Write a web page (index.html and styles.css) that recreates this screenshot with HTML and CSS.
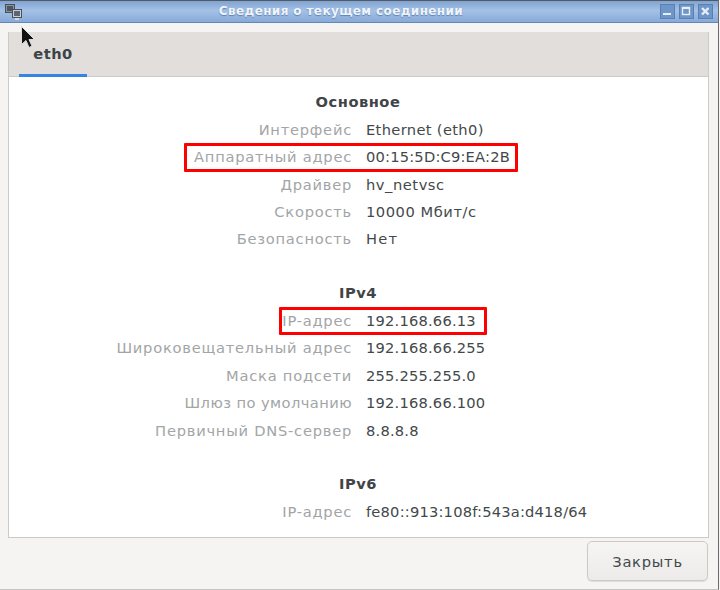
FILE: index.html
```html
<!DOCTYPE html>
<html lang="ru">
<head>
<meta charset="utf-8">
<title>Сведения о текущем соединении</title>
<link rel="stylesheet" href="styles.css">
</head>
<body>
<div class="window">
  <header class="titlebar">
    <svg class="app-icon" width="18" height="16" viewBox="0 0 18 16">
      <rect x="1.500" y="0.500" width="9" height="8" fill="#8a93a0" stroke="#4a4f57"/>
      <rect x="3" y="2" width="6" height="5" fill="#4b5563"/>
      <rect x="8.500" y="5.500" width="9" height="8" fill="#c9ced4" stroke="#4a4f57"/>
      <rect x="10" y="7" width="6" height="5" fill="#5b6573"/>
      <rect x="11" y="14" width="4" height="2" fill="#d5d8dc"/>
    </svg>
    <span class="title">Сведения о текущем соединении</span>
    <div class="win-buttons">
      <span class="win-btn"><svg width="13" height="13" viewBox="0 0 13 13"><rect x="2" y="8" width="8" height="2" fill="#e8eef6"/></svg></span>
      <span class="win-btn"><svg width="13" height="13" viewBox="0 0 13 13"><rect x="2.500" y="2.500" width="7" height="7" fill="none" stroke="#e8eef6" stroke-width="1.400"/><rect x="2" y="2" width="8" height="2" fill="#e8eef6"/></svg></span>
      <span class="win-btn"><svg width="13" height="13" viewBox="0 0 13 13"><path d="M3 3l6.500 6.500M9.500 3l-6.500 6.500" stroke="#e8eef6" stroke-width="2.400" fill="none"/></svg></span>
    </div>
  </header>
  <main class="content">
    <section class="notebook">
      <div class="tabbar"><div class="tab">eth0</div></div>
      <div class="page">
        <h2 class="heading">Основное</h2>
        <dl class="rows">
          <dt>Интерфейс</dt><dd class="latin">Ethernet (eth0)</dd>
          <dt>Аппаратный адрес</dt><dd>00:15:5D:C9:EA:2B</dd>
          <dt>Драйвер</dt><dd class="word">hv_netvsc</dd>
          <dt>Скорость</dt><dd class="word">10000 Мбит/с</dd>
          <dt>Безопасность</dt><dd class="short">Нет</dd>
        </dl>
        <h2 class="heading">IPv4</h2>
        <dl class="rows">
          <dt>IP-адрес</dt><dd>192.168.66.13</dd>
          <dt>Широковещательный адрес</dt><dd>192.168.66.255</dd>
          <dt>Маска подсети</dt><dd>255.255.255.0</dd>
          <dt class="tight">Шлюз по умолчанию</dt><dd>192.168.66.100</dd>
          <dt>Первичный DNS-сервер</dt><dd>8.8.8.8</dd>
        </dl>
        <h2 class="heading">IPv6</h2>
        <dl class="rows">
          <dt>IP-адрес</dt><dd>fe80::913:108f:543a:d418/64</dd>
        </dl>
      </div>
    </section>
    <footer class="actions"><button class="close" type="button">Закрыть</button></footer>
  </main>
  <div class="mark mark-mac"></div>
  <div class="mark mark-ip"></div>
  <svg class="cursor" width="16" height="26" viewBox="0 0 16 26">
    <path d="M1.500 1.500V19.500L6 15.500L9 22.500L12 21L9 14.500H14.500Z" fill="#111" stroke="#ddd" stroke-width="1"/>
  </svg>
</div>
</body>
</html>
```

FILE: styles.css
```css
* { box-sizing: border-box; }
html, body { margin: 0; padding: 0; }
body { width: 720px; height: 590px; overflow: hidden; background: #f5f4f2; font-family: "DejaVu Sans", sans-serif; font-size: 14.67px; color: #3f4547; }
.window { position: relative; width: 719px; height: 590px; display: flex; flex-direction: column; background: #f5f4f2; border-right: 1px solid #6b6b6b; border-bottom: 1px solid #c4c4c2; }
.titlebar { flex: none; height: 23px; display: flex; align-items: center; position: relative; background: linear-gradient(#7fa3d3, #a4c1e6 45%, #88aad8); border-top: 1px solid #55595e; border-bottom: 1px solid #6188b8; }
.app-icon { position: absolute; left: 4px; top: 3px; }
.title { flex: 1; text-align: center; font-size: 12px; font-weight: bold; letter-spacing: 0.39px; color: #f0f4fa; text-shadow: 0 1px 1px #5d82b0; padding: 0 36px 2px 0; }
.win-buttons { position: absolute; right: 5px; top: 3px; display: flex; gap: 4px; }
.win-btn { width: 15px; height: 15px; display: flex; align-items: center; justify-content: center; background: #6f96c8; border: 1px solid #5a80b0; }
.content { flex: 1; display: flex; flex-direction: column; padding: 9px 9px 0 8px; }
.notebook { flex: none; height: 506px; display: flex; flex-direction: column; border: 1px solid #cdc9c5; border-top: 0; }
.tabbar { flex: none; height: 45px; background: #e1dedb; border-bottom: 1px solid #cdc9c5; padding-left: 10px; }
.tab { width: 68px; height: 45px; text-align: center; padding-top: 13px; font-weight: bold; letter-spacing: 0.5px; line-height: 18px; color: #3d4346; border-bottom: 3px solid #3584e4; }
.page { flex: 1; min-height: 0; overflow: hidden; background: #fff; padding-top: 16px; }
.heading { margin: 0; height: 18px; line-height: 18px; font-size: 14.67px; font-weight: bold; letter-spacing: 0.5px; text-align: center; color: #3f4547; padding-right: 1px; }
.rows { margin: 0 0 31px; padding-top: 5px; display: grid; grid-template-columns: 343px 1fr; column-gap: 14px; grid-auto-rows: 27.45px; align-items: center; line-height: 18px; }
.rows dt { text-align: right; color: #a2a5a6; letter-spacing: 0.76px; }
.rows dt.tight { letter-spacing: 0.43px; }
.rows dd { margin: 0; color: #43494b; letter-spacing: 0.2px; }
.rows dd.latin { letter-spacing: 0.34px; }
.rows dd.word { letter-spacing: 0.55px; }
.rows dd.short { letter-spacing: 1.2px; }
.actions { flex: 1; display: flex; justify-content: flex-end; padding: 3px 1px 0 0; }
.close { width: 121px; height: 40px; font: 14.67px "DejaVu Sans", sans-serif; letter-spacing: 0.75px; color: #43494b; background: linear-gradient(#f6f5f4, #edebe9); border: 1px solid #cdc9c5; border-radius: 5px; box-shadow: 0 1px 1px #dedbd8; }
.mark { position: absolute; border: 3px solid #f00; border-radius: 1px; }
.mark-mac { left: 184px; top: 143px; width: 334px; height: 29px; }
.mark-ip { left: 279px; top: 307px; width: 208px; height: 28px; }
.cursor { position: absolute; left: 20px; top: 25px; }
```
